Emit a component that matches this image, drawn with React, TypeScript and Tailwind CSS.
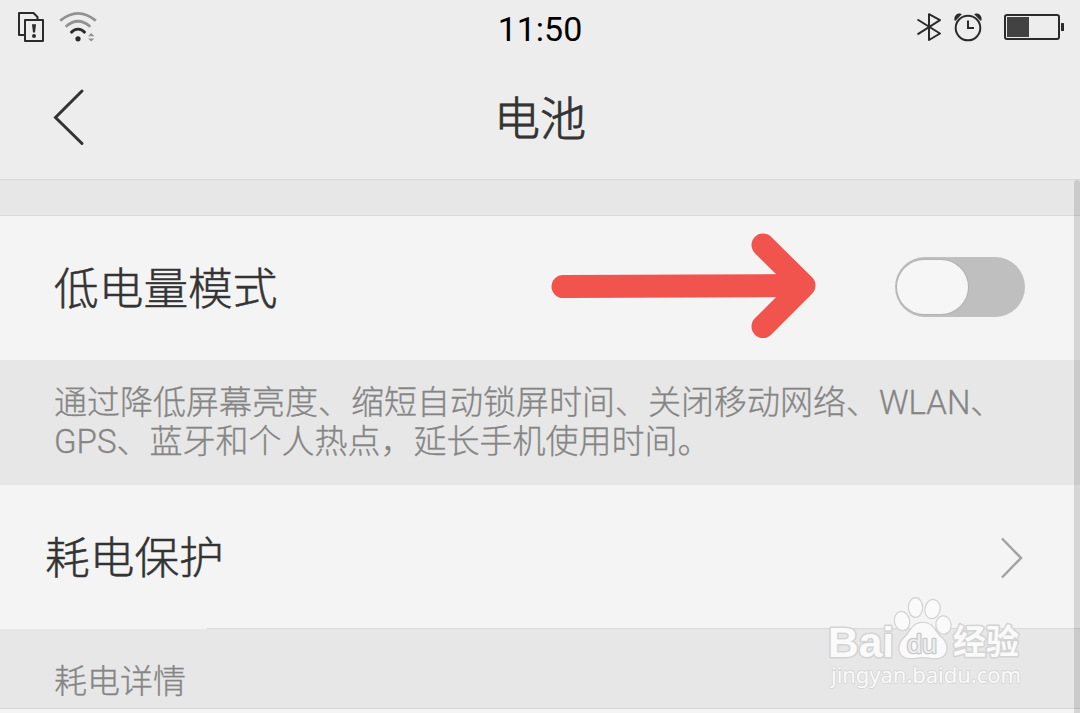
import type { ReactNode } from "react";

function NoticeIcon() {
  return (
    <svg width="28" height="32" viewBox="0 0 28 32" fill="none" stroke="#2b2b2b" strokeWidth="2">
      <path d="M7 24H2V2h14.500l4 4v2" strokeLinejoin="round" />
      <rect x="8" y="9" width="18" height="21" strokeLinejoin="round" />
      <path d="M15 13.300h4l-1 8.200h-2z" fill="#2b2b2b" stroke="none" />
      <circle cx="17" cy="25" r="2" fill="#2b2b2b" stroke="none" />
    </svg>
  );
}

function WifiIcon() {
  return (
    <svg width="38" height="32" viewBox="0 0 38 32" fill="none" strokeWidth="2.800">
      <path d="M1.200 9.700Q19-5 36.800 9.700" stroke="#929292" />
      <path d="M6.700 15.700Q19 4.900 31.300 15.700" stroke="#929292" />
      <path d="M11.700 21.900Q19 14.500 26.300 21.900" stroke="#2b2b2b" />
      <circle cx="19" cy="27.800" r="2.600" fill="#2b2b2b" />
      <path d="M29 25.200l3.200-3.200 3.200 3.200zM29 27.400l3.200 3.200 3.200-3.200z" fill="#929292" />
    </svg>
  );
}

function BluetoothIcon() {
  return (
    <svg width="26" height="30" viewBox="0 0 26 30" fill="none" stroke="#2b2b2b" strokeWidth="2">
      <path d="M1.500 7.500L24 21.500 13 28V2.200L24 8.200 1.500 22.300" strokeLinejoin="round" />
    </svg>
  );
}

function AlarmIcon() {
  return (
    <svg width="30" height="30" viewBox="0 0 30 30" fill="none" stroke="#2b2b2b" strokeWidth="2">
      <circle cx="15" cy="16" r="12.300" />
      <path d="M15 8.500V16h6" />
      <path
        d="M1.500 8.500C.5 3 5 .2 9 2L2.500 8.700zM28.500 8.500C29.500 3 25 .2 21 2l6.500 6.700z"
        fill="#2b2b2b"
        stroke="none"
      />
    </svg>
  );
}

function BatteryIcon() {
  return (
    <svg width="60" height="28" viewBox="0 0 60 28" fill="none">
      <rect x="1" y="2" width="54" height="24" rx="2" stroke="#2b2b2b" strokeWidth="2" />
      <rect x="3" y="4" width="22" height="20" fill="#424242" />
      <rect x="57" y="10" width="3" height="8" rx="0.500" fill="#2b2b2b" />
    </svg>
  );
}

function Arrow() {
  return (
    <svg
      className="mb-1 shrink-0"
      width="266"
      height="106"
      viewBox="0 0 266 106"
      fill="none"
      stroke="#f0544c"
      strokeWidth="23"
      strokeLinecap="round"
      strokeLinejoin="round"
    >
      <path d="M12 53.500L250 52.500" />
      <path d="M212 12L253 52.500 212 93.500" />
    </svg>
  );
}

function Toggle() {
  return (
    <button className="mb-0.5 flex h-[60px] w-[130px] shrink-0 items-center rounded-full bg-[#bfbfbf] pl-0.5">
      <span className="h-[54px] w-[71px] rounded-[28px] bg-[#f6f6f6] shadow-[0_0_1px_1px_#b2b2b2]" />
    </button>
  );
}

function Row({ label, className, children }: { label: string; className: string; children: ReactNode }) {
  return (
    <div className={`flex h-36 shrink-0 items-center bg-[#f4f4f4] ${className}`}>
      <span className="pt-[5px] text-[44.700px] leading-none whitespace-nowrap [-webkit-text-stroke:0.5px]">
        {label}
      </span>
      {children}
    </div>
  );
}

function Watermark() {
  return (
    <svg
      className="absolute top-[592px] left-[822px]"
      width="210"
      height="104"
      viewBox="0 0 210 104"
      fill="#fafafa"
      stroke="#d3d3d3"
      strokeWidth="3"
      strokeLinejoin="round"
      paintOrder="stroke"
    >
      <text
        x="6"
        y="65"
        fontSize="42"
        fontWeight="bold"
        fontFamily="'Liberation Sans', sans-serif"
        textLength="66"
        lengthAdjust="spacingAndGlyphs"
      >
        Bai
      </text>
      <g strokeWidth="2.500">
        <ellipse cx="80" cy="29" rx="7" ry="9" transform="rotate(-12 80 29)" />
        <ellipse cx="93.500" cy="15.500" rx="6.500" ry="9.300" />
        <ellipse cx="110.500" cy="17" rx="7" ry="9" transform="rotate(12 110.500 17)" />
        <ellipse cx="121.500" cy="33" rx="7" ry="8.500" transform="rotate(-8 121.500 33)" />
        <path d="M101 31c-11 0-12 9-19 15.500-7 6-6 19 5 19.500 6 .3 9-1 14-1s8 1.500 14 1c11-1 12-13 5-19.500-8-6.500-8-15.500-19-15.500z" />
      </g>
      <text
        x="85"
        y="61"
        fontSize="26"
        fontFamily="'Liberation Sans', sans-serif"
        fill="#ededed"
        stroke="#c8c8c8"
        strokeWidth="2.500"
        textLength="30"
        lengthAdjust="spacingAndGlyphs"
      >
        du
      </text>
      <text
        x="131"
        y="62"
        fontSize="34"
        fontWeight="bold"
        fontFamily="'Noto Sans CJK SC', sans-serif"
        textLength="66"
        lengthAdjust="spacingAndGlyphs"
      >
        经验
      </text>
      <text
        x="9"
        y="91"
        fontSize="22"
        strokeWidth="1.500"
        fontWeight="400"
        fontFamily="'Noto Sans', sans-serif"
        textLength="190"
        lengthAdjust="spacing"
      >
        jingyan.baidu.com
      </text>
    </svg>
  );
}

export default function App() {
  return (
    <div className="relative flex h-[713px] w-[1080px] flex-col overflow-hidden bg-[#e7e7e7] font-[Roboto,'Noto_Sans_CJK_SC',sans-serif] font-light text-[#333333]">
      <div className="grid h-[58px] shrink-0 grid-cols-3 items-center bg-[#ededed]">
        <div className="flex items-center gap-3.5 pb-1 pl-[17px]">
          <NoticeIcon />
          <WifiIcon />
        </div>
        <span className="text-center text-[34px] leading-none font-normal text-black">11:50</span>
        <div className="flex items-center justify-end pr-4 pb-1">
          <BluetoothIcon />
          <span className="mr-[21px] ml-[11px]">
            <AlarmIcon />
          </span>
          <BatteryIcon />
        </div>
      </div>

      <header className="grid h-[122px] shrink-0 grid-cols-3 items-center border-b border-[#d9d9d9] bg-[#ededed] pb-1">
        <svg className="ml-[52px]" width="34" height="58" viewBox="0 0 34 58" fill="none" stroke="#333333" strokeWidth="3">
          <path d="M30 3L3.500 29.500 30 55.500" strokeLinecap="round" />
        </svg>
        <h1 className="pt-[5px] text-center text-[46px] leading-none [-webkit-text-stroke:0.8px]">电池</h1>
      </header>

      <div className="h-9 shrink-0 border-b border-[#dadada]" />

      <Row label="低电量模式" className="pr-[55px] pl-[54px]">
        <div className="flex grow items-center justify-end gap-[78px]">
          <Arrow />
          <Toggle />
        </div>
      </Row>

      <p className="h-[125px] shrink-0 pt-[23px] pl-[54px] text-[33px] leading-[39px] whitespace-nowrap text-[#858585] [-webkit-text-stroke:0.3px]">
        通过降低屏幕亮度、缩短自动锁屏时间、关闭移动网络、WLAN、
        <br />
        GPS、蓝牙和个人热点，延长手机使用时间。
      </p>

      <Row label="耗电保护" className="justify-between pr-14 pl-[45px]">
        <svg width="25" height="44" viewBox="0 0 25 44" fill="none" stroke="#a3a3a3" strokeWidth="2.500">
          <path d="M3 3.500L22 23 3 42.500" />
        </svg>
      </Row>

      <div className="flex h-20 shrink-0 flex-col border-b border-[#d5d5d5]">
        <div className="-mt-px ml-[207px] h-px bg-[#dadada]" />
        <h2 className="pt-[33px] pl-[54px] text-[33px] leading-[39px] text-[#858585] [-webkit-text-stroke:0.3px]">
          耗电详情
        </h2>
      </div>
      <div className="grow bg-[#f4f4f4]" />

      <div className="absolute top-[180px] right-0 bottom-0 w-1.5 rounded-t-sm bg-black/12" />
      <Watermark />
    </div>
  );
}
